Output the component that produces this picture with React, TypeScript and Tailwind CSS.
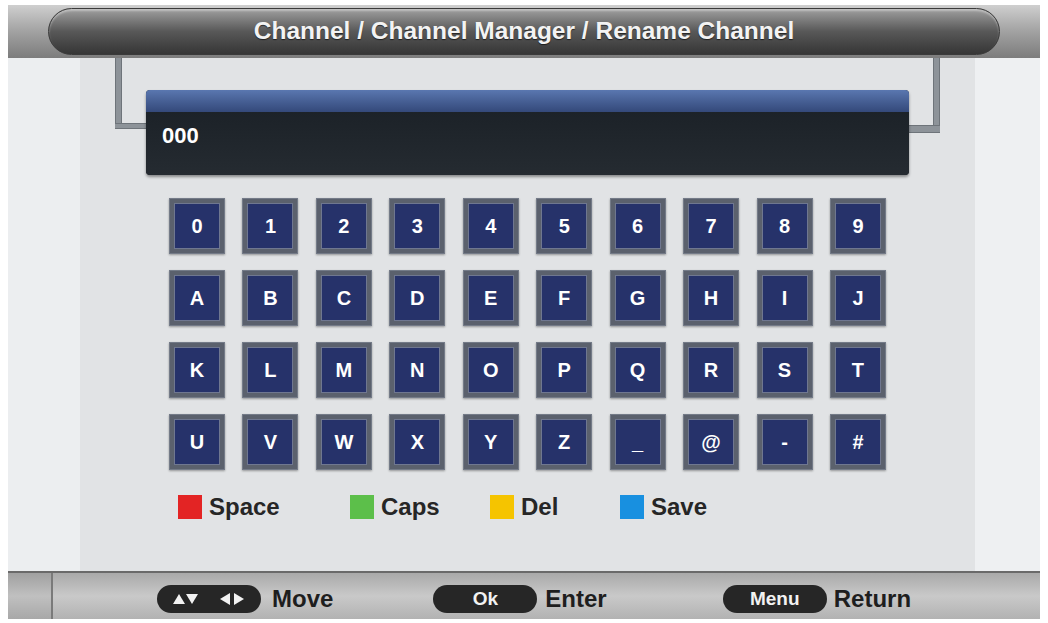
import React from 'react';

const rows: string[][] = [
  ['0', '1', '2', '3', '4', '5', '6', '7', '8', '9'],
  ['A', 'B', 'C', 'D', 'E', 'F', 'G', 'H', 'I', 'J'],
  ['K', 'L', 'M', 'N', 'O', 'P', 'Q', 'R', 'S', 'T'],
  ['U', 'V', 'W', 'X', 'Y', 'Z', '_', '@', '-', '#'],
];

const legend = [
  { color: 'bg-[#e32424]', label: 'Space', width: 'w-[172px]' },
  { color: 'bg-[#5cbf4a]', label: 'Caps', width: 'w-[140px]' },
  { color: 'bg-[#f5c400]', label: 'Del', width: 'w-[130px]' },
  { color: 'bg-[#1890e0]', label: 'Save', width: 'w-[120px]' },
];

const Key: React.FC<{ label: string }> = ({ label }) => (
  <div className="w-[56px] h-[56px] bg-[#5b616d] border border-[#747b88] p-[4px] shadow-[0_1px_2px_rgba(0,0,0,0.35)]">
    <div className="w-full h-full bg-[#26326a] border border-[#6f7790] flex items-center justify-center text-white text-[20px] font-bold">
      {label}
    </div>
  </div>
);

const Pill: React.FC<{ children: React.ReactNode }> = ({ children }) => (
  <div className="w-[104px] h-[28px] rounded-full bg-[#262626] flex items-center justify-center text-[#f2f2f2] text-[19px] font-bold">
    {children}
  </div>
);

const Arrows = () => (
  <svg width="72" height="14" viewBox="0 0 72 14" fill="#f2f2f2">
    <polygon points="0,12 6,2 12,12" />
    <polygon points="13,2 25,2 19,12" />
    <polygon points="47,7 57,1 57,13" />
    <polygon points="61,1 71,7 61,13" />
  </svg>
);

export default function App() {
  return (
    <div className="w-[1048px] h-[623px] bg-white pt-[5px] px-[8px] font-['Liberation_Sans',Arial,sans-serif] overflow-hidden">
      {/* title bar */}
      <div className="h-[53px] bg-linear-to-b from-[#cfcfcf] via-[#a2a2a2] to-[#7c7c7c] px-[40px] pt-[3px]">
        <div className="h-[47px] rounded-full bg-linear-to-b from-[#a0a0a0] via-[#585858] to-[#363636] border border-[#3a3a3a] shadow-[inset_0_2px_2px_rgba(255,255,255,0.35)] flex items-center justify-center">
          <span className="text-[#f3f3f3] text-[24.5px] font-bold [text-shadow:0_1px_1px_rgba(0,0,0,0.6)]">
            Channel / Channel Manager / Rename Channel
          </span>
        </div>
      </div>

      {/* body */}
      <div className="flex h-[513px]">
        <div className="w-[72px] bg-[#eceef0]" />
        <div className="relative w-[895px] bg-[#e1e3e5] px-[66px] pt-[32px]">
          {/* brackets */}
          <div className="absolute left-[35px] top-0 w-[7px] h-[71px] bg-[#8d9399] border-x border-[#6e747a]" />
          <div className="absolute left-[35px] top-[65px] w-[32px] h-[6px] bg-[#8d9399] border-y border-[#6e747a]" />
          <div className="absolute right-[35px] top-0 w-[7px] h-[75px] bg-[#8d9399] border-x border-[#6e747a]" />
          <div className="absolute right-[35px] top-[67px] w-[32px] h-[8px] bg-[#8d9399] border-y border-[#6e747a]" />

          {/* input */}
          <div className="relative h-[85px] rounded-[4px] overflow-hidden bg-[#1f252b] shadow-[0_2px_3px_rgba(0,0,0,0.4)]">
            <div className="h-[22px] bg-linear-to-b from-[#5a77b0] to-[#34497a]" />
            <div className="h-[63px] bg-linear-to-b from-[#1c2228] to-[#252b31] pl-[16px] pt-[7px] text-white text-[22px] font-bold">
              000
            </div>
          </div>

          {/* keyboard */}
          <div className="mx-auto w-[717px] mt-[23px] grid grid-cols-10 gap-x-[17.4px] gap-y-[16px]">
            {rows.flat().map((k, i) => (
              <Key key={i} label={k} />
            ))}
          </div>

          {/* legend */}
          <div className="flex items-center mt-[19px] ml-[32px]">
            {legend.map(l => (
              <div key={l.label} className={`flex items-center gap-[7px] ${l.width}`}>
                <div className={`w-[24px] h-[24px] ${l.color}`} />
                <span className="text-[#262626] text-[24px] font-bold">{l.label}</span>
              </div>
            ))}
          </div>
        </div>
        <div className="flex-1 bg-[#eef0f2]" />
      </div>

      {/* bottom bar */}
      <div className="h-[48px] flex border-t-2 border-[#6a6a6a] bg-linear-to-b from-[#a9a9a9] via-[#c9c9c9] to-[#b2b2b2]">
        <div className="w-[45px] border-r-2 border-[#7a7a7a] bg-linear-to-b from-[#a0a0a0] via-[#c0c0c0] to-[#a8a8a8]" />
        <div className="flex items-center pt-[6px] ml-[104px] gap-[11px]">
          <Pill><Arrows /></Pill>
          <span className="text-[#1e1e1e] text-[24px] font-bold">Move</span>
        </div>
        <div className="flex items-center pt-[6px] ml-[100px] gap-[8px]">
          <Pill>Ok</Pill>
          <span className="text-[#1e1e1e] text-[24px] font-bold">Enter</span>
        </div>
        <div className="flex items-center pt-[6px] ml-[116px] gap-[7px]">
          <Pill>Menu</Pill>
          <span className="text-[#1e1e1e] text-[24px] font-bold">Return</span>
        </div>
      </div>
    </div>
  );
}
